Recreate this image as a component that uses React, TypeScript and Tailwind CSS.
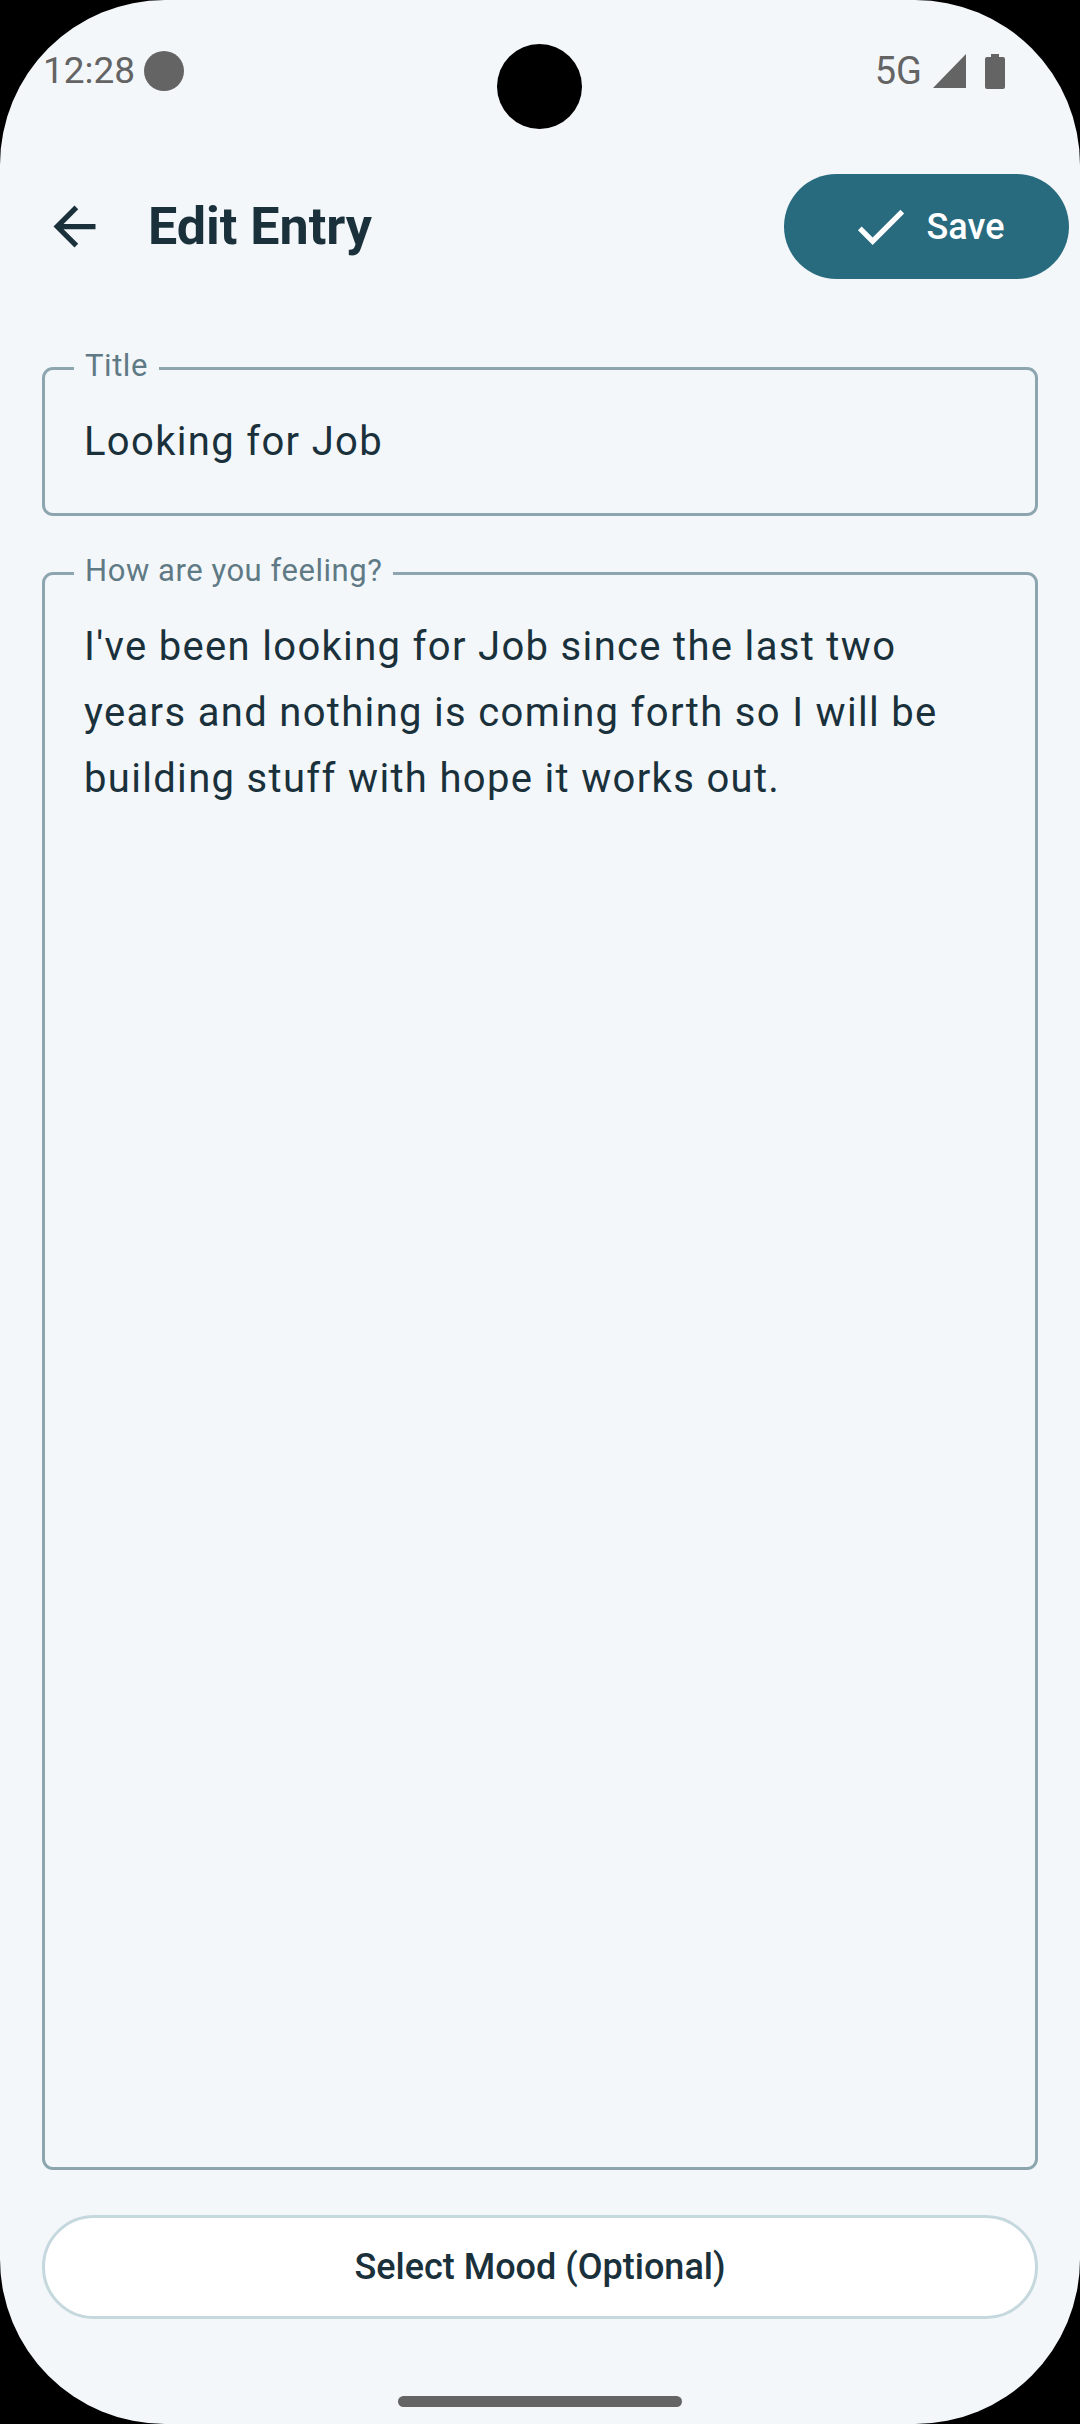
import React from "react";

const font = { fontFamily: "Roboto, sans-serif" };

const OutlinedField = ({
  label,
  className,
  children,
}: {
  label: string;
  className: string;
  children: React.ReactNode;
}) => (
  <fieldset className={`rounded-[11px] border-[3px] border-[#8ca5ae] ${className}`}>
    <legend className="ml-[29px] h-[32px] px-[11px] text-[31px] leading-[28px] tracking-[0.55px] text-[#5f7a85]">
      {label}
    </legend>
    <p className="px-[39px] pt-[25px] text-[40px] leading-[66px] tracking-[1.32px] text-[#1a313b]">
      {children}
    </p>
  </fieldset>
);

const App: React.FC = () => {
  return (
    <div className="h-[2424px] w-[1080px] bg-black" style={font}>
      <div className="relative flex h-full flex-col overflow-hidden rounded-[165px] bg-[#f3f7fa]">
        {/* status bar */}
        <div className="flex h-[174px] shrink-0 items-start justify-between pl-[43px] pr-[75px] pt-[48px] text-[#646464]">
          <div className="flex items-center gap-[9px]">
            <span className="text-[37px] leading-[46px]">12:28</span>
            <span className="h-[40px] w-[40px] rounded-full bg-[#646464]" />
          </div>
          <div className="flex items-center">
            <span className="text-[38px] leading-[46px]">5G</span>
            <svg width="33" height="34" viewBox="0 0 33 34" className="ml-[11px]">
              <path d="M33 0V34H0Z" fill="#646464" />
            </svg>
            <svg width="20" height="35" viewBox="0 0 20 35" className="ml-[19px]">
              <path
                d="M6 0h8v3h4a2 2 0 0 1 2 2v28a2 2 0 0 1-2 2H2a2 2 0 0 1-2-2V5a2 2 0 0 1 2-2h4Z"
                fill="#646464"
              />
            </svg>
          </div>
        </div>
        <div className="absolute left-[497px] top-[44px] h-[85px] w-[85px] rounded-full bg-black" />

        {/* header */}
        <div className="flex h-[105px] shrink-0 items-center justify-between pl-[43px] pr-[11px] text-[#1a313b]">
          <div className="flex items-center">
            <svg width="63" height="63" viewBox="0 0 24 24" fill="#1a313b">
              <path d="M20 11H7.83l5.59-5.59L12 4l-8 8 8 8 1.41-1.41L7.83 13H20v-2z" />
            </svg>
            <h1 className="ml-[42px] text-[52px] font-bold leading-[64px]">Edit Entry</h1>
          </div>
          <button className="flex h-[105px] w-[285px] items-center justify-center rounded-full bg-[#286b7f] text-white">
            <svg width="63" height="63" viewBox="0 0 24 24" fill="#ffffff">
              <path d="M9 16.17L4.83 12l-1.42 1.41L9 19 21 7l-1.41-1.41z" />
            </svg>
            <span className="ml-[15px] text-[36px] font-medium">Save</span>
          </button>
        </div>

        {/* form */}
        <div className="flex min-h-0 flex-1 flex-col px-[42px] pt-[73px]">
          <OutlinedField label="Title" className="h-[164px] shrink-0">
            Looking for Job
          </OutlinedField>
          <OutlinedField label="How are you feeling?" className="mt-[41px] min-h-0 flex-1">
            I've been looking for Job since the last two years and nothing is coming forth so I will be
            building stuff with hope it works out.
          </OutlinedField>
          <button className="mt-[45px] flex h-[104px] shrink-0 items-center justify-center rounded-full border-[3px] border-[#c5d8de] bg-white text-[36px] font-medium text-[#1a313b]">
            Select Mood (Optional)
          </button>
        </div>

        {/* gesture bar */}
        <div className="flex h-[105px] shrink-0 justify-center pt-[77px]">
          <div className="h-[11px] w-[284px] rounded-full bg-[#646464]" />
        </div>
      </div>
    </div>
  );
};

export default App;
